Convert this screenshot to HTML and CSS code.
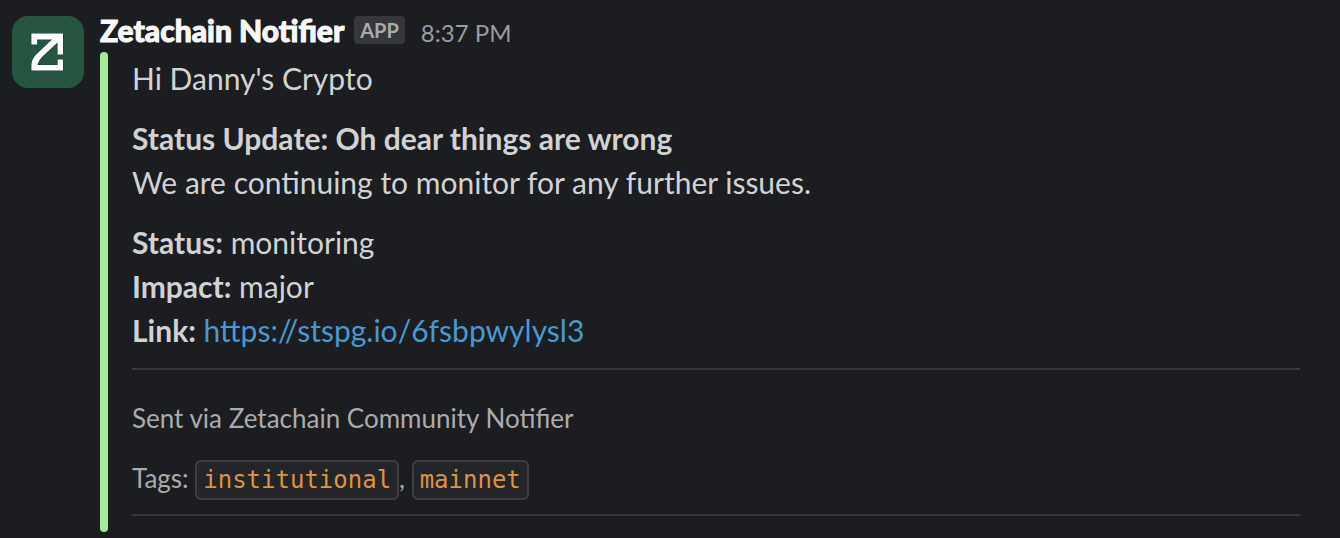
FILE: index.html
```
<!DOCTYPE html>
<html lang="en">
<head>
<meta charset="utf-8">
<title>Zetachain Notifier</title>
<link rel="stylesheet" href="styles.css">
</head>
<body>
<article class="message">
  <svg class="avatar" viewBox="0 0 72 72" role="img" aria-label="Zetachain Notifier">
    <rect width="72" height="72" rx="16" fill="#245541"/>
    <path d="M19.4 17.6H51V38.6H45.6V26.6L31 40Q26.4 44.2 25.6 49H45.6V43.4H51V54.4H19.4V50Q19.4 43.5 24 38.8L40 23.6H25.2V28.4H19.4Z" fill="#fff" stroke="#183d2f" stroke-width="1" paint-order="stroke"/>
  </svg>
  <div class="content">
    <header class="header">
      <strong class="sender">Zetachain Notifier</strong>
      <span class="badge">APP</span>
      <time class="time">8:37 PM</time>
    </header>
    <div class="attachment">
      <div class="bar"></div>
      <div class="body">
        <p class="text">Hi Danny's Crypto</p>
        <p class="text"><b>Status Update: Oh dear things are wrong</b><br>We are continuing to monitor for any further issues.</p>
        <p class="text"><b>Status:</b> monitoring<br><b>Impact:</b> major<br><b>Link:</b> <a class="link" href="https://stspg.io/6fsbpwylysl3">https://stspg.io/6fsbpwylysl3</a></p>
        <hr class="rule">
        <div class="context">
          <p class="note">Sent via Zetachain Community Notifier</p>
          <p class="note">Tags: <code class="tag">institutional</code>, <code class="tag">mainnet</code></p>
        </div>
        <hr class="rule">
      </div>
    </div>
  </div>
</article>
</body>
</html>
```
FILE: styles.css
```
body {
  margin: 0;
  background: #1c1d21;
  color: #d1d2d3;
  font: 30px/44px Lato, sans-serif;
}
.message {
  display: flex;
  gap: 16px;
  padding: 16px 40px 6px 12px;
}
.avatar {
  flex: none;
  width: 72px;
  height: 72px;
}
.content {
  flex: 1;
  min-width: 0;
}
.header {
  display: flex;
  align-items: baseline;
  padding-bottom: 5px;
  line-height: 28px;
}
.sender {
  color: #f8f8f8;
  font-weight: 900;
  -webkit-text-stroke: 1px #f8f8f8;
}
.badge {
  align-self: flex-start;
  margin: 0 16px 0 10px;
  padding: 0 6px;
  border-radius: 4px;
  background: #35373b;
  color: #ababad;
  font-size: 20px;
  font-weight: 700;
}
.time {
  color: #9b9c9e;
  font-size: 24px;
}
.attachment {
  display: flex;
  gap: 24px;
}
.bar {
  flex: none;
  width: 8px;
  border-radius: 4px;
  background: #a6ec98;
}
.body {
  flex: 1;
  min-width: 0;
  padding: 4px 0 16px;
}
.text {
  margin: 0 0 16px;
}
.rule {
  height: 2px;
  margin: 0;
  border: 0;
  background: #35373b;
}
.context {
  display: grid;
  gap: 16px;
  padding: 26px 0 14px;
}
.note {
  margin: 0;
  color: #ababad;
  font-size: 26px;
}
.link {
  color: #4799d1;
  text-decoration: none;
}
.tag {
  padding: 4px 6px;
  border: 2px solid #3c3e42;
  border-radius: 6px;
  background: #232529;
  color: #dc953f;
  font: 24px/36px "DejaVu Sans Mono", monospace;
}
```
